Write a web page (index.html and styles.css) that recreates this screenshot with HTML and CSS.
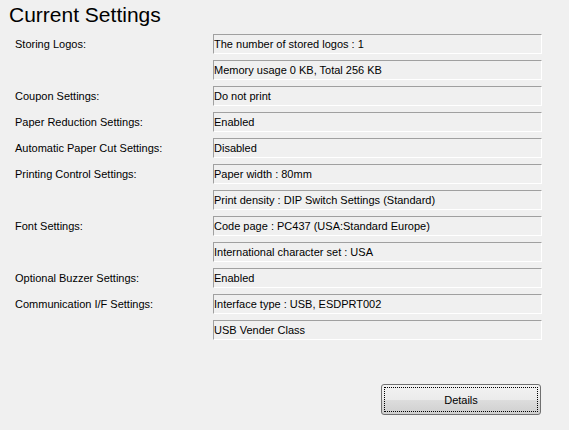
FILE: index.html
```html
<!DOCTYPE html>
<html>
<head>
<meta charset="utf-8">
<link rel="stylesheet" href="styles.css">
</head>
<body>
<div class="page">
  <h1 class="title">Current Settings</h1>
  <div class="grid">
    <div class="label">Storing Logos:</div><div class="field">The number of stored logos : 1</div>
    <div class="label"></div><div class="field">Memory usage 0 KB, Total 256 KB</div>
    <div class="label">Coupon Settings:</div><div class="field">Do not print</div>
    <div class="label">Paper Reduction Settings:</div><div class="field">Enabled</div>
    <div class="label">Automatic Paper Cut Settings:</div><div class="field">Disabled</div>
    <div class="label">Printing Control Settings:</div><div class="field">Paper width : 80mm</div>
    <div class="label"></div><div class="field">Print density : DIP Switch Settings (Standard)</div>
    <div class="label">Font Settings:</div><div class="field">Code page : PC437 (USA:Standard Europe)</div>
    <div class="label"></div><div class="field">International character set : USA</div>
    <div class="label">Optional Buzzer Settings:</div><div class="field">Enabled</div>
    <div class="label">Communication I/F Settings:</div><div class="field">Interface type : USB, ESDPRT002</div>
    <div class="label"></div><div class="field">USB Vender Class</div>
  </div>
  <div class="actions">
    <button class="btn"><span class="btn-focus">Details</span></button>
  </div>
</div>
</body>
</html>
```
FILE: styles.css
```css
html, body {
  margin: 0;
  padding: 0;
  background: #f0f0f0;
}
body {
  width: 569px;
  height: 430px;
  overflow: hidden;
  font-family: "Liberation Sans", Arial, sans-serif;
  font-size: 11px;
  color: #000;
}
.page {
  display: flex;
  flex-direction: column;
}
.title {
  margin: 0;
  padding: 3px 0 0 9px;
  height: 31px;
  box-sizing: border-box;
  font-weight: normal;
  font-size: 21px;
  line-height: 24px;
  color: #000;
}
.grid {
  display: grid;
  grid-template-columns: 198px 329px;
  grid-auto-rows: 20px;
  row-gap: 6px;
  padding-left: 15px;
  margin-top: 3px;
}
.label {
  line-height: 20px;
  white-space: nowrap;
}
.field {
  box-sizing: border-box;
  border-top: 1px solid #a0a0a0;
  border-left: 1px solid #a0a0a0;
  border-right: 1px solid #ffffff;
  border-bottom: 1px solid #ffffff;
  line-height: 18px;
  padding-left: 0;
  white-space: nowrap;
  overflow: hidden;
}
.actions {
  display: flex;
  justify-content: flex-end;
  padding-right: 28px;
  margin-top: 44px;
}
.btn {
  width: 160px;
  height: 31px;
  box-sizing: border-box;
  border: 1px solid #707070;
  border-radius: 3px;
  background: linear-gradient(to bottom, #f2f2f2 0%, #ebebeb 50%, #dddddd 51%, #cfcfcf 100%);
  padding: 2px;
  font-family: "Liberation Sans", Arial, sans-serif;
  font-size: 11px;
  color: #000;
  display: flex;
}
.btn-focus {
  flex: 1;
  display: flex;
  align-items: center;
  justify-content: center;
  border: 1px dotted #000;
}
```
